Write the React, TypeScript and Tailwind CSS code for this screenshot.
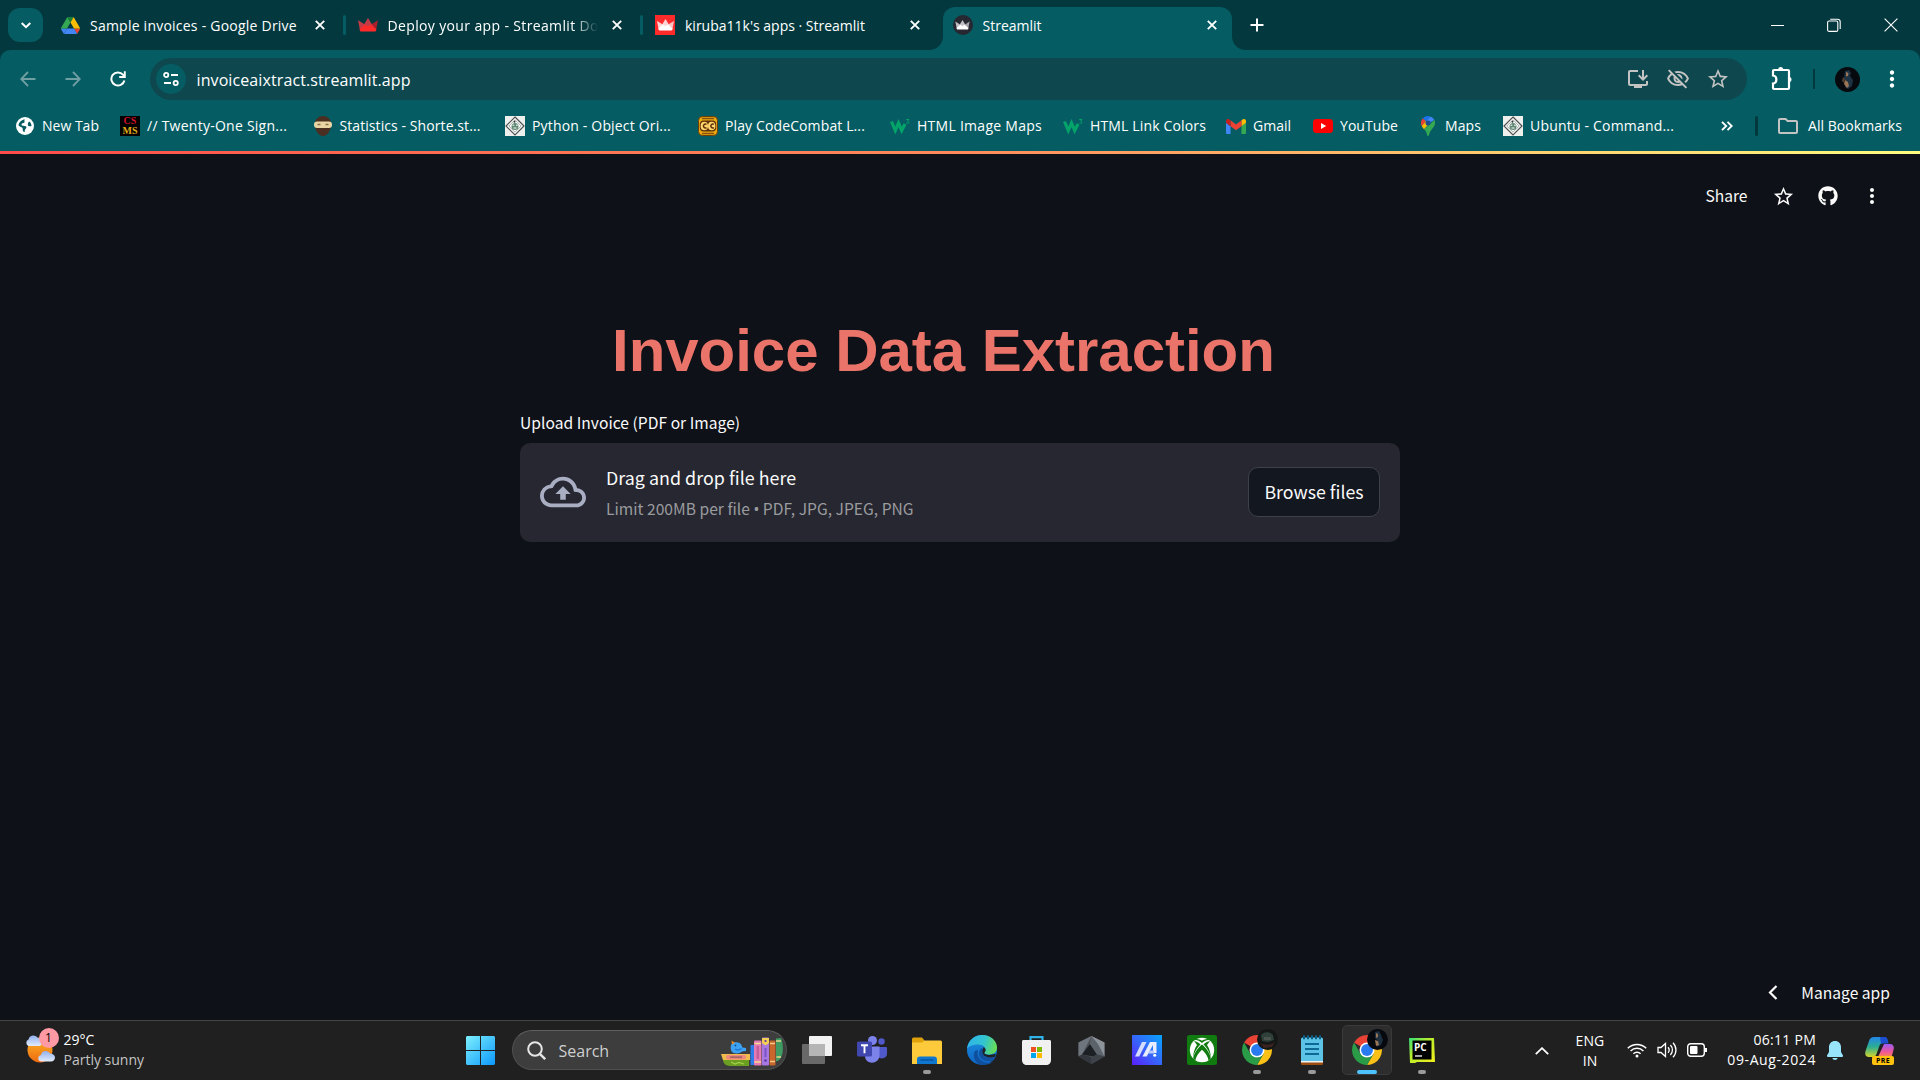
import type { ReactNode } from "react";
import {
  MdInstallDesktop,
  MdMoreVert,
  MdOutlineCloudUpload,
  MdOutlineFolder,
  MdOutlineVisibilityOff,
  MdStarBorder,
} from "react-icons/md";
import { FaGithub } from "react-icons/fa";

/* ---------- small glyphs ---------- */

function CloseGlyph() {
  return (
    <svg viewBox="0 0 10 10" className="size-[10px]" stroke="#fff" strokeWidth="1.9" fill="none">
      <path d="M.8.8l8.4 8.4M9.2.8L.8 9.2" />
    </svg>
  );
}

function Crown({ className, left, mid, right }: { className: string; left: string; mid: string; right: string }) {
  return (
    <svg viewBox="0 0 20 14" className={className}>
      <path d="M0 2.200l7 4.300L3.200 13.400c-.6 0-1-.4-1.200-1z" fill={mid} />
      <path d="M20 2.200l-7 4.300 3.800 6.900c.6 0 1-.4 1.200-1z" fill={right} />
      <path d="M10 0l5.500 9L10 12 4.500 9z" fill={mid} />
      <path d="M1.600 11.200L7 6.500l3 2 3-2 5.400 4.700-.4 1.200c-.2.600-.6 1-1.200 1H3.200c-.6 0-1-.4-1.200-1z" fill={left} />
    </svg>
  );
}

function DriveIcon() {
  return (
    <svg viewBox="0 0 87.3 78" className="h-[17px] w-[19px]">
      <path d="M6.600 66.850l3.850 6.650c.8 1.400 1.950 2.500 3.300 3.300L27.500 53H0c0 1.550.4 3.100 1.200 4.500z" fill="#4285f4" />
      <path d="M43.650 25L29.900 1.200c-1.350.8-2.500 1.900-3.300 3.300L1.200 48.500C.4 49.900 0 51.450 0 53h27.500z" fill="#34a853" />
      <path d="M73.550 76.800c1.350-.8 2.500-1.900 3.300-3.300l9.250-16c.8-1.400 1.200-2.950 1.200-4.500H59.800z" fill="#ea4335" />
      <path d="M43.650 25L57.400 1.200C56.050.4 54.500 0 52.900 0H34.400c-1.600 0-3.150.45-4.500 1.200z" fill="#188038" />
      <path d="M59.800 53H27.500L13.750 76.800c1.350.8 2.900 1.200 4.500 1.200h50.800c1.600 0 3.150-.45 4.500-1.200z" fill="#4285f4" />
      <path d="M73.400 26.500L60.700 4.500c-.8-1.400-1.950-2.500-3.300-3.300L43.650 25 59.800 53h27.450c0-1.550-.4-3.100-1.200-4.500z" fill="#fbbc04" />
    </svg>
  );
}

/* ---------- tab strip ---------- */

function Tab({ icon, title, fade, active, divider, tracking }: { icon: ReactNode; title: string; fade?: boolean; active?: boolean; divider?: boolean; tracking: string }) {
  return (
    <div className={`relative flex h-[43px] shrink-0 items-center rounded-t-[12px] pb-[7px] pl-[10px] ${active ? "w-[289.500px] bg-[#055c62]" : "w-[297.5px]"}`}>
      {active && (
        <>
          <svg viewBox="0 0 14 14" className="absolute -left-[14px] bottom-0 size-[14px]" fill="#055c62">
            <path d="M14 0v14H0C8 14 14 8 14 0z" />
          </svg>
          <svg viewBox="0 0 14 14" className="absolute -right-[14px] bottom-0 size-[14px]" fill="#055c62">
            <path d="M0 0v14h14C6 14 0 8 0 0z" />
          </svg>
        </>
      )}
      <span className="flex w-5 items-center justify-center">{icon}</span>
      <span className={`ml-[10px] w-[210px] overflow-hidden pt-px text-[14px] leading-5 whitespace-nowrap ${tracking} ${fade ? "[mask-image:linear-gradient(90deg,#000_88%,transparent_100%)]" : ""}`}>
        {title}
      </span>
      <span className="ml-[14.500px]">
        <CloseGlyph />
      </span>
      {divider && <span className="ml-[18px] h-5 w-[3px] rounded-full bg-[#055c62]" />}
    </div>
  );
}

function TabStrip() {
  return (
    <div className="flex h-[50px] bg-[#03393e]">
      <div className="mt-2 ml-2 flex h-[34px] w-[35px] items-center justify-center rounded-[12px] bg-[#055c62]">
        <svg viewBox="0 0 10 7" className="h-[7px] w-[10px]" fill="none" stroke="#fff" strokeWidth="2">
          <path d="M.7 1L5 5.200 9.300 1" />
        </svg>
      </div>
      <div className="ml-[7px] flex pt-[7px]">
        <Tab icon={<DriveIcon />} title="Sample invoices - Google Drive" divider tracking="tracking-[0.23px]" />
        <Tab
          icon={<Crown className="h-[14px] w-5" left="#ff2b2b" mid="#c33b46" right="#a8202c" />}
          title="Deploy your app - Streamlit Docs"
          fade
          divider
          tracking="tracking-[0.36px]"
        />
        <Tab
          icon={
            <span className="flex size-5 items-center justify-center bg-[#ff2b2b]">
              <Crown className="h-3 w-[17px]" left="#ffffff" mid="#ffd5d5" right="#ffc4c4" />
            </span>
          }
          title="kiruba11k's apps · Streamlit"
          tracking="tracking-normal"
        />
        <Tab
          icon={
            <span className="flex size-5 items-center justify-center rounded-full bg-[#262730]">
              <Crown className="h-[10px] w-[15px]" left="#ffffff" mid="#bfbfc4" right="#a5a5ab" />
            </span>
          }
          title="Streamlit"
          active
          tracking="tracking-normal"
        />
      </div>
      <svg viewBox="0 0 14 14" className="mt-[18px] ml-[18px] size-[14px]" stroke="#fff" strokeWidth="2">
        <path d="M7 .5v13M.5 7h13" />
      </svg>
      <div className="mt-[17px] mr-[22px] ml-auto flex h-4 items-center gap-[43px] text-white">
        <span className="h-px w-[13px] bg-white" />
        <svg viewBox="0 0 14 14" className="size-[14px]" fill="none" stroke="#fff" strokeWidth="1.1">
          <rect x=".6" y="3" width="10.200" height="10.400" rx="1.500" />
          <path d="M3.200 1.200h7.300c1.600 0 2.700 1 2.700 2.700v7" />
        </svg>
        <svg viewBox="0 0 14 14" className="size-[14px]" stroke="#fff" strokeWidth="1.100">
          <path d="M.6.6l12.800 12.800M13.400.6L.6 13.400" />
        </svg>
      </div>
    </div>
  );
}

/* ---------- toolbar ---------- */

function Avatar() {
  return (
    <svg viewBox="0 0 25 25" className="ml-[20px] size-[25px]">
      <circle cx="12.500" cy="12.500" r="12.500" fill="#06090e" />
      <path d="M10 4l4-1 2 3-1 3 3 4-1 6-4 3-3-2 1-5-2-4z" fill="#1d3242" />
      <path d="M11 5l2.500 1-.5 3-2 .5zM10 13l3 2 1 4-2 2-3-4z" fill="#9a7657" />
      <path d="M8 10l2 2-1 4-2-2z" fill="#53422f" />
    </svg>
  );
}

function Toolbar() {
  return (
    <div className="flex h-[58px] items-center text-white">
      <svg viewBox="0 0 16 16" className="ml-5 size-4" fill="none" stroke="#6f9fa3" strokeWidth="1.800">
        <path d="M15.500 8H1.600M8 1L1.200 8 8 15" />
      </svg>
      <svg viewBox="0 0 16 16" className="ml-[28.500px] size-4" fill="none" stroke="#6f9fa3" strokeWidth="1.800">
        <path d="M.5 8h13.900M8 1l6.800 7L8 15" />
      </svg>
      <svg viewBox="0 0 16 16" className="ml-[29px] size-4" fill="none" stroke="#fff" strokeWidth="2">
        <path d="M14.400 9.500A6.600 6.600 0 1 1 13 3.700l1.500 1.800" />
        <path d="M14.800.3v5.700H9.200" strokeWidth="1.900" />
      </svg>
      <div className="ml-[24.500px] flex h-[42px] w-[1597px] items-center rounded-full bg-[#0e484e] pl-[6px]">
        <span className="flex size-[30px] items-center justify-center rounded-full bg-[#055c62]">
          <svg viewBox="0 0 16 14" className="h-[14px] w-4" fill="none" stroke="#fff" strokeWidth="1.800">
            <circle cx="3.200" cy="3" r="2.100" />
            <path d="M8 3h7M1 11h7" />
            <circle cx="12.700" cy="11" r="2.100" />
          </svg>
        </span>
        <span className="ml-[10.500px] pt-px text-[16px] leading-6 tracking-[0.1px]">invoiceaixtract.streamlit.app</span>
        <div className="mr-[17px] ml-auto flex items-center gap-[16px] text-[#c3c3c3]">
          <MdInstallDesktop className="size-6" />
          <MdOutlineVisibilityOff className="size-6" />
          <MdStarBorder className="size-6" />
        </div>
      </div>
      <svg viewBox="0 0 22 26" className="mb-[3px] ml-[24px] h-[26px] w-[22px]" fill="none" stroke="#fff" strokeWidth="2.200">
        <path d="M3 5h14a1 1 0 0 1 1 1v17a1 1 0 0 1-1 1H3a1 1 0 0 1-1-1v-4.500c4.500-.5 4.500-7.500 0-8V6a1 1 0 0 1 1-1z" />
        <path d="M7.200 4.500a2.500 2.500 0 0 1 5 0zM18 12a2.500 2.500 0 0 1 0 5z" fill="#fff" stroke="none" />
      </svg>
      <span className="ml-[20px] h-5 w-[2px] bg-[#03393e]" />
      <Avatar />
      <MdMoreVert className="ml-[19px] size-[26px]" />
    </div>
  );
}

/* ---------- bookmarks ---------- */

function GlobeIcon() {
  return (
    <svg viewBox="0 0 20 20" className="size-5">
      <circle cx="10" cy="10" r="9" fill="#fff" />
      <path d="M10 3.500c-1.500 1.400.3 2.200-.6 3-1.200 1-2.900.4-2.900 2.200 0 1.500 3.800.6 4.800 2 .8 1.300-1.200 2-1.500 3.600-.1.900.3 1.700-.4 1.700-2.400-.6-1.200-3-2-4.100C6.600 11 4 10.500 3.500 9.300 4 6 6.800 3.500 10 3.500zM14.200 5.500c1.500 1 2.300 2.700 2.300 4.500-1.500.6-2.900.5-3.500-.6-.6-1.300.2-2.900 1.200-3.900z" fill="#055c62" />
    </svg>
  );
}

function TitleStackIcon() {
  return (
    <span className="flex size-5 flex-col items-center justify-center bg-black font-['Liberation_Serif'] text-[10px] leading-[10px] font-bold">
      <span className="block h-[10px] text-[#d0142c]">CS</span>
      <span className="block h-[10px] text-[#e0ad1a]">MS</span>
    </span>
  );
}

function NinjaIcon() {
  return (
    <svg viewBox="0 0 20 20" className="size-5">
      <path d="M10 0c4.500 0 7.500 3 8 7 .7 6-3 13-8 13S1.300 13 2 7c.5-4 3.500-7 8-7z" fill="#4a2e22" />
      <rect x="1" y="5.500" width="18" height="6.500" rx="3" fill="#e9d5a4" />
      <path d="M4.500 8.500h3M12.500 8.500h3" stroke="#8a7048" strokeWidth="1.500" />
    </svg>
  );
}

function DiamondIcon() {
  return (
    <svg viewBox="0 0 20 20" className="size-5">
      <rect width="20" height="20" fill="#eef0ee" />
      <path d="M10 1l9 9-9 9-9-9z" fill="#fff" stroke="#4b4f4d" strokeWidth="1.200" />
      <path d="M10 3.800l6.200 6.200-6.200 6.200L3.800 10z" fill="none" stroke="#8d9491" strokeWidth=".8" />
      <circle cx="10" cy="10.500" r="3.500" fill="#5f8873" />
      <path d="M7.500 9.200h1.800M11 9.200h1.800M8.500 12h3" stroke="#fff" strokeWidth="1" />
      <circle cx="9.500" cy="5.800" r="1" fill="#333" />
    </svg>
  );
}

function CodeCombatIcon() {
  return (
    <svg viewBox="0 0 20 20" className="size-5">
      <rect x=".5" y=".5" width="19" height="19" rx="4" fill="#e9a90f" stroke="#6b3d09" />
      <path d="M4 2.500h12M4 17.500h12" stroke="#8a5210" strokeWidth="1.400" />
      <rect x="1.800" y="4.500" width="16.400" height="11" rx="4" fill="#5d2f0b" />
      <ellipse cx="6.300" cy="10" rx="3.700" ry="4.300" fill="#ffd76a" />
      <ellipse cx="13.700" cy="10" rx="3.700" ry="4.300" fill="#ffd76a" />
      <path d="M8.500 8.300a2 2 0 1 0 0 3.400M15.900 8.300a2 2 0 1 0 0 3.400" fill="none" stroke="#5d2f0b" strokeWidth="1.500" />
    </svg>
  );
}

function W3Icon() {
  return (
    <svg viewBox="0 0 20 20" className="size-5" fill="none" stroke="#04a36a">
      <path d="M1.500 5.500l3.800 9L8.500 7l3.200 7.500L15 8" strokeWidth="3.200" />
      <path d="M16.200 3.500h2.800l-1.500 1.600c2.400.2 1.800 3-1.200 2.100" strokeWidth="1" />
    </svg>
  );
}

function GmailIcon() {
  return (
    <svg viewBox="52 42 88 66" className="h-[15px] w-5">
      <path fill="#4285f4" d="M58 108h14V74L52 59v43c0 3.320 2.690 6 6 6" />
      <path fill="#34a853" d="M120 108h14c3.320 0 6-2.690 6-6V59l-20 15" />
      <path fill="#fbbc04" d="M120 48v26l20-15v-8c0-7.420-8.470-11.650-14.400-7.200" />
      <path fill="#ea4335" d="M72 74V48l24 18 24-18v26L96 92" />
      <path fill="#c5221f" d="M52 51v8l20 15V48l-5.600-4.200c-5.940-4.450-14.400-.22-14.400 7.200" />
    </svg>
  );
}

function YouTubeIcon() {
  return (
    <svg viewBox="0 0 20 14" className="h-[14px] w-5">
      <rect width="20" height="14" rx="3.500" fill="#f00" />
      <path d="M8 4l5.200 3L8 10z" fill="#fff" />
    </svg>
  );
}

function MapsIcon() {
  return (
    <svg viewBox="0 0 14 20" className="h-5 w-[14px]">
      <path d="M7 0a7 7 0 0 0-5.300 2.400L5 5.200 9.200.4A7 7 0 0 0 7 0z" fill="#1a73e8" />
      <path d="M1.700 2.400A7 7 0 0 0 .7 10L5 5.200z" fill="#ea4335" />
      <path d="M9.200.4L5 5.200l-.1 3.500L13.400 4A7 7 0 0 0 9.200.4z" fill="#4285f4" />
      <path d="M.7 10a17 17 0 0 0 2.400 3.200L9 6.500 5 5.200z" fill="#fbbc04" />
      <path d="M13.400 4A6.900 6.900 0 0 1 14 7c0 4-3.500 5.500-5.200 9.500C8 18.500 8 20 7 20s-1-2-1.800-4a12 12 0 0 0-2.100-2.800z" fill="#34a853" />
      <circle cx="7" cy="7" r="2.500" fill="#1b4f8f" />
    </svg>
  );
}

const bookmarks: { icon: ReactNode; label: string; box: string; tracking: string }[] = [
  { icon: <GlobeIcon />, label: "New Tab", box: "w-[105px]", tracking: "tracking-normal" },
  { icon: <TitleStackIcon />, label: "// Twenty-One Sign...", box: "w-[192.500px]", tracking: "tracking-[0.25px]" },
  { icon: <NinjaIcon />, label: "Statistics - Shorte.st...", box: "w-[192.500px]", tracking: "tracking-[0.08px]" },
  { icon: <DiamondIcon />, label: "Python - Object Ori...", box: "w-[193px]", tracking: "tracking-[0.17px]" },
  { icon: <CodeCombatIcon />, label: "Play CodeCombat L...", box: "w-[192px]", tracking: "tracking-[0.12px]" },
  { icon: <W3Icon />, label: "HTML Image Maps", box: "w-[173px]", tracking: "tracking-[0.27px]" },
  { icon: <W3Icon />, label: "HTML Link Colors", box: "w-[163px]", tracking: "tracking-[0.15px]" },
  { icon: <GmailIcon />, label: "Gmail", box: "w-[87px]", tracking: "tracking-normal" },
  { icon: <YouTubeIcon />, label: "YouTube", box: "w-[105px]", tracking: "tracking-[0.06px]" },
  { icon: <MapsIcon />, label: "Maps", box: "w-[85px]", tracking: "tracking-[0.1px]" },
  { icon: <DiamondIcon />, label: "Ubuntu - Command...", box: "w-[218px]", tracking: "tracking-[0.19px]" },
];

function BookmarksBar() {
  return (
    <div className="flex h-[36px] items-center pl-[15px] text-[14px] leading-5 whitespace-nowrap">
      {bookmarks.map((b) => (
        <div key={b.label} className={`flex shrink-0 items-center gap-[7px] ${b.box}`}>
          <span className="flex w-5 items-center justify-center">{b.icon}</span>
          <span className={b.tracking}>{b.label}</span>
        </div>
      ))}
      <svg viewBox="0 0 12 10" className="h-[10px] w-3" fill="none" stroke="#fff" strokeWidth="1.900">
        <path d="M1 .8L5.200 5 1 9.200M6.500.8L10.700 5 6.500 9.200" />
      </svg>
      <span className="ml-[22px] h-5 w-[3px] rounded-full bg-[#03393e]" />
      <MdOutlineFolder className="ml-[18px] size-6 text-[#c3c3c3]" />
      <span className="ml-[8px] tracking-[0.05px]">All Bookmarks</span>
    </div>
  );
}

/* ---------- page ---------- */

function AppPage() {
  return (
    <main className="flex flex-1 flex-col bg-[#0e1117] font-['Noto_Sans_CJK_SC','Noto_Sans',sans-serif] text-[#fafafa]">
      <div className="h-[3px] bg-linear-to-r from-[#ff4b4b] via-[#ff8a5c] to-[#fffd80]" />
      <div className="mt-[26px] flex h-8 items-center justify-end pr-[36px]">
        <span className="-mt-[2px] text-[15.600px] leading-6">Share</span>
        <MdStarBorder className="ml-[24px] size-[23px]" />
        <FaGithub className="ml-[23.500px] size-5" />
        <MdMoreVert className="ml-[22px] size-6" />
      </div>
      <h1 className="mt-[103px] ml-[612px] font-['Liberation_Sans',Arial,sans-serif] text-[60px] leading-[72px] font-bold tracking-[-0.03px] text-[#ea7469]">
        Invoice Data Extraction
      </h1>
      <section className="mx-auto mt-[23px] w-[880px]">
        <p className="h-[33px] text-[15.600px] leading-6 tracking-[0.03px]">Upload Invoice (PDF or Image)</p>
        <div className="flex h-[99px] items-center rounded-[10px] bg-[#262730] px-5">
          <MdOutlineCloudUpload className="mb-[2px] size-[46px] text-[#a9aec3]" />
          <div className="ml-5 flex flex-col gap-[6px]">
            <span className="text-[17.850px] leading-[26px] tracking-[0.03px]">Drag and drop file here</span>
            <span className="text-[15.600px] leading-6 tracking-[0.02px] text-[#9a9b9f]">
              Limit 200MB per file <span className="font-['Noto_Sans']">•</span> PDF, JPG, JPEG, PNG
            </span>
          </div>
          <button className="mb-[2px] ml-auto h-[50px] w-[132px] rounded-[10px] border border-[#3e4148] bg-[#131720] pb-px text-[17.750px] leading-6">
            Browse files
          </button>
        </div>
      </section>
      <div className="mt-auto mb-[16px] flex h-6 items-center justify-end pr-[30px]">
        <svg viewBox="0 0 10 15" className="h-[15px] w-[10px]" fill="none" stroke="#fafafa" strokeWidth="2.200">
          <path d="M8.500 1L2 7.500 8.500 14" />
        </svg>
        <span className="ml-[23px] text-[15.600px] leading-6 tracking-[0.02px]">Manage app</span>
      </div>
    </main>
  );
}

/* ---------- taskbar icons ---------- */

function WeatherIcon() {
  return (
    <span className="relative flex h-[30px] w-[32px]">
      <svg viewBox="0 0 32 30" className="h-[30px] w-8">
        <defs>
          <linearGradient id="sun" x1="0" y1="0" x2="0" y2="1">
            <stop offset="0" stopColor="#fbb628" />
            <stop offset="1" stopColor="#ee6a0f" />
          </linearGradient>
          <linearGradient id="cloud" x1="0" y1="0" x2="0" y2="1">
            <stop offset="0" stopColor="#8fb0ee" />
            <stop offset="1" stopColor="#e3ecfb" />
          </linearGradient>
        </defs>
        <circle cx="15" cy="15" r="12.500" fill="url(#sun)" />
        <path d="M3.500 11A3.500 3.500 0 0 1 3.500 4.500 5.200 5.200 0 0 1 13 3c3 0 4 2 4 4s-1 4-3 4z" fill="url(#cloud)" />
        <path d="M16 26.500a3.300 3.300 0 0 1 0-6.500 4.800 4.800 0 0 1 9-1.500c3 0 5 1.700 5 4s-1.500 4-4 4z" fill="url(#cloud)" />
      </svg>
      <span className="absolute -top-[7px] left-[14px] flex size-5 items-center justify-center rounded-full bg-[#ff99a4] text-[12px] leading-none text-black">1</span>
    </span>
  );
}

function StartIcon() {
  return (
    <svg viewBox="0 0 29 29" className="size-[29px]">
      <defs>
        <linearGradient id="start" x1="0" y1="0" x2="1" y2="1">
          <stop offset="0" stopColor="#7df0fd" />
          <stop offset="1" stopColor="#0c97fb" />
        </linearGradient>
      </defs>
      <path d="M1 0h13v14H0V1zM15 0h13l1 1v13H15zM0 15h14v14H1l-1-1zM15 15h14v13l-1 1H15z" fill="url(#start)" />
    </svg>
  );
}

function BooksIcon() {
  return (
    <svg viewBox="0 0 62 30" className="h-[30px] w-[62px]">
      <path d="M2 23h26v6H9c-4 0-7-3-7-6z" fill="#6b9f22" />
      <path d="M10 25l4 2 4-1.500 5 1.500" stroke="#a6cf4c" strokeWidth="1.200" fill="none" />
      <path d="M0 17h29v6H2z" fill="#f0bd4c" />
      <rect x="5" y="18" width="20" height="4.500" rx="2" fill="#f0897d" />
      <rect x="9" y="19.300" width="12" height="1.800" fill="#a66666" />
      <path d="M10.500 7c2-2 5.500-2.500 8-1 2 1.200 2.500 3 2.800 4.500L25 11v3l-4 .5c-1.500 2-6 2.500-8.500 1.500-3-1.500-3.500-6-2-9z" fill="#3ea2f2" />
      <path d="M10.500 3.500l3.500 2.300-3 1.700z" fill="#e98a1f" />
      <path d="M14 12c2 1.500 5 1 6.500-.5" stroke="#1c78cf" strokeWidth="1.500" fill="none" />
      <circle cx="14.500" cy="8.500" r=".9" fill="#174d86" />
      <rect x="29.500" y="8" width="3.500" height="20" fill="#2e7bea" />
      <rect x="33" y="3.500" width="7.500" height="25" rx="1" fill="#e47bb6" />
      <path d="M33.500 6.500h6.500M33.500 25h6.500" stroke="#f8dc8a" strokeWidth="1.600" />
      <path d="M36.800 9v13" stroke="#c45f9b" strokeWidth="2.500" />
      <rect x="41" y=".5" width="7" height="28" rx="1" fill="#a778e2" />
      <path d="M41 1h7v5L44.500 8.500 41 6z" fill="#f5cf55" />
      <circle cx="44.500" cy="4" r="1.100" fill="#5b37a5" />
      <circle cx="44.500" cy="23.500" r="1.300" fill="#5b37a5" />
      <path d="M44.500 11v9" stroke="#7a52c6" strokeWidth="2" />
      <rect x="48.500" y="3.500" width="6" height="25" rx="1" fill="#c8662c" />
      <path d="M49 6.500h5M49 24.500h5" stroke="#f8c984" strokeWidth="1.600" />
      <path d="M55 1.500l5-.5c2 4 2.500 13 1 17-1 4-3 6-6 6.500z" fill="#3f9b62" />
      <path d="M55 4h5M55.500 20h4.500" stroke="#e9d98a" strokeWidth="1.300" />
    </svg>
  );
}

function TaskViewIcon() {
  return (
    <svg viewBox="0 0 30 28" className="h-7 w-[30px]">
      <rect x="7" y="0" width="23" height="20" rx="1" fill="#f2f2f2" />
      <rect x="0" y="8" width="23" height="20" rx="1" fill="#696969" />
      <path d="M7 8h16v12H7z" fill="#b5b5b5" />
    </svg>
  );
}

function TeamsIcon() {
  return (
    <svg viewBox="0 0 30 27" className="mb-px h-[27px] w-[30px]">
      <circle cx="24.500" cy="5.500" r="3.200" fill="#5059c9" />
      <path d="M21 11h8a1 1 0 0 1 1 1v6c0 4-6 6-9 3z" fill="#5059c9" />
      <circle cx="15.500" cy="4.500" r="4.500" fill="#7b83eb" />
      <path d="M9 10.500h13.500V19c0 10-14.500 10-14.500 1z" fill="#7b83eb" />
      <rect x="0" y="5.500" width="15" height="15" rx="1.500" fill="#4048b0" />
      <path d="M4 9.300h7M7.500 9.300v8" stroke="#fff" strokeWidth="1.900" />
    </svg>
  );
}

function FolderIcon() {
  return (
    <svg viewBox="0 0 30 27" className="h-[27px] w-[30px]">
      <path d="M0 2a1.500 1.500 0 0 1 1.500-1.500H10l2.500 3V8H0z" fill="#e0a10a" />
      <path d="M0 5.500h10l2.500-2H28.500A1.500 1.500 0 0 1 30 5v22H0z" fill="#fdca3b" />
      <path d="M5 27v-4.500c0-2 1-3 3-3h14c2 0 3 1 3 3V27z" fill="#0f78ce" />
      <path d="M8.500 23h13" stroke="#09509a" strokeWidth="1.300" />
    </svg>
  );
}

function EdgeIcon() {
  return (
    <svg viewBox="0 0 30 30" className="mb-px size-[30px]">
      <defs>
        <linearGradient id="edgeTop" x1="0" y1=".4" x2="1" y2=".6">
          <stop offset="0" stopColor="#2fb6ea" />
          <stop offset=".55" stopColor="#33c4cd" />
          <stop offset="1" stopColor="#6be04e" />
        </linearGradient>
        <linearGradient id="edgeSide" x1="0" y1="0" x2="0" y2="1">
          <stop offset="0" stopColor="#1c93e0" />
          <stop offset="1" stopColor="#0d63c4" />
        </linearGradient>
      </defs>
      <circle cx="15" cy="15" r="15" fill="url(#edgeSide)" />
      <path d="M11 15c-2 7 3 13 11 13 2 0 4-.9 5.500-2.500C24 29 20 30 15 30 9 29 6 23 7 18c.6-2 2-3 4-3z" fill="#104f9c" />
      <path d="M17 18c2.500 3 7 4 11.500 2.500.5 1.500-1 4-2.500 5-5 2-13 0-14-6-.4-3 1-5.500 3-6.500 2 1 3 3 2 5z" fill="#12519f" />
      <path d="M0 14C1 5 8 0 15 0c9 0 15 6 15 12.500 0 5-4 7-8 7-3.500 0-5.500-1.200-4.500-2.500 2.500-4-1-7.500-6.500-7.500C6 9.500 1.500 11 0 14z" fill="url(#edgeTop)" />
      <path d="M16.500 12c3 1.800 2.500 4 1 5.500-1 1.500 2 2.500 5 2.500l6-1c.8 2-1 3-3.500 3.200-5 .4-9-1.200-9.500-4.700-.2-2 .6-3 1-5.500z" fill="#202020" />
    </svg>
  );
}

function StoreIcon() {
  return (
    <svg viewBox="0 0 29 29" className="mr-px size-[29px]">
      <path d="M8.500 6V1.200h12V6" fill="none" stroke="#2fb3e8" strokeWidth="2.200" />
      <path d="M0 5.500C0 4.600.6 4 1.500 4h26c.9 0 1.500.6 1.500 1.500V24c0 3-2 5-5 5H5c-3 0-5-2-5-5z" fill="#f1f1f1" />
      <rect x="9" y="11" width="5" height="5" fill="#f25022" />
      <rect x="15" y="11" width="5" height="5" fill="#7fba00" />
      <rect x="9" y="17" width="5" height="5" fill="#00a4ef" />
      <rect x="15" y="17" width="5" height="5" fill="#ffb900" />
    </svg>
  );
}

function HexIcon() {
  return (
    <svg viewBox="0 0 27 28" className="mr-px h-7 w-[27px]">
      <path d="M13.500 0L26.500 6.500V20.500L13.500 28 .5 20.500V6.500z" fill="#4c5158" />
      <path d="M13.500 0L.5 6.500V20L4 18.500z" fill="#6f757d" />
      <path d="M13.500 0l13 6.500v14L20 17z" fill="#8d939a" />
      <path d="M.5 20.500L13.500 28v-7L4 18.500z" fill="#33373d" />
      <path d="M12 8l7 10.500-3 2-12-2z" fill="#1c1f23" />
      <path d="M13.500 0L12 8l7 10.500 7.500 2L20 8z" fill="#5d636b" />
      <path d="M13.500 28v-7l5.500-2.500 7.500 2z" fill="#3e4249" />
    </svg>
  );
}

function MyAsusIcon() {
  return (
    <svg viewBox="0 0 30 30" className="size-[30px]">
      <defs>
        <linearGradient id="asus" x1="0" y1="1" x2="1" y2="0">
          <stop offset="0" stopColor="#5a1df8" />
          <stop offset=".5" stopColor="#3567fb" />
          <stop offset="1" stopColor="#06a5fb" />
        </linearGradient>
      </defs>
      <rect width="30" height="30" fill="url(#asus)" />
      <path d="M3 21.500L10 7h4.500L7.200 21.500z" fill="#d5dcff" />
      <path d="M10.500 21.500L18 7h6.500v11H21v-8L14.700 21.500z" fill="#e8ecff" />
      <path d="M18 15.500h4v3h-5.600z" fill="#b9c8ff" />
      <circle cx="22.700" cy="20.200" r="1.500" fill="#fff" />
    </svg>
  );
}

function XboxIcon() {
  return (
    <svg viewBox="0 0 30 30" className="size-[30px]">
      <rect width="30" height="30" rx="2.500" fill="#107c10" />
      <circle cx="15" cy="15" r="12.200" fill="#fff" />
      <path d="M7.300 5.400c2-1 5 .6 7.700 2.600 2.700-2 5.700-3.600 7.700-2.600l-.6-.9C20.500 3.500 17 4.500 15 5.700 13 4.500 9.500 3.500 7.900 4.500z" fill="#107c10" />
      <path d="M15 9.500c4 3.200 9 10 8.700 14.200L21.500 25.500C21 21 17.500 17 15 14.800 12.500 17 9 21 8.500 25.500l-2.200-1.800C6 19.500 11 12.700 15 9.500z" fill="#107c10" />
      <path d="M7 6c2.500.2 5 2 6.500 3.500C11 12 7 17 6 23c.3-5 1.500-9.500 4-13C9 8.500 8 7.200 7 6zM23 6c-2.500.2-5 2-6.500 3.500C19 12 23 17 24 23c-.3-5-1.500-9.500-4-13 1-1.500 2-2.800 3-4z" fill="#107c10" />
    </svg>
  );
}

function ChromeIcon({ children }: { children: ReactNode }) {
  return (
    <span className="relative mb-px size-[30px]">
      <svg viewBox="0 0 48 48" className="size-[30px]">
        <path d="M24 24L3.220 12A24 24 0 0 1 44.780 12z" fill="#ea4335" />
        <path d="M24 12h20.780A24 24 0 0 1 24 48l10.400-18z" fill="#fbc116" />
        <path d="M3.220 12L13.600 30 24 36l3-.3L24 48A24 24 0 0 1 3.220 12z" fill="#2a9c48" />
        <path d="M34.400 30L24 48l-3-1 6-12z" fill="#2a9c48" />
        <circle cx="24" cy="24" r="12" fill="#fff" />
        <circle cx="24" cy="24" r="9.500" fill="#2a7bf0" />
      </svg>
      <svg viewBox="0 0 21 21" className="absolute -top-[6px] left-[15px] size-[21px]">
        {children}
      </svg>
    </span>
  );
}

function NotepadIcon() {
  return (
    <svg viewBox="0 0 22 30" className="h-[30px] w-[22px]">
      <rect x="0" y="26" width="22" height="4" rx="1" fill="#9a4c12" />
      <rect x="0" y="25" width="22" height="2.500" fill="#f3f3f3" />
      <path d="M0 4a1.500 1.500 0 0 1 1.500-1.500h19A1.500 1.500 0 0 1 22 4v22H0z" fill="#5cc3e6" />
      <path d="M3 .3v4M7 .3v4M11 .3v4M15 .3v4M19 .3v4" stroke="#0b5f86" strokeWidth="2" />
      <path d="M4 9h14M4 14h14M4 19h14" stroke="#0e6a94" strokeWidth="1.800" />
    </svg>
  );
}

function PyCharmIcon() {
  return (
    <svg viewBox="0 0 26 26" className="size-[26px]">
      <defs>
        <linearGradient id="pc" x1="0" y1="0" x2="1" y2="1">
          <stop offset="0" stopColor="#2fe07a" />
          <stop offset=".4" stopColor="#b6ee2e" />
          <stop offset="1" stopColor="#f5ee1c" />
        </linearGradient>
      </defs>
      <path d="M0 1h25l1 24H8l-2 1H1z" fill="url(#pc)" />
      <rect x="3.500" y="3.500" width="19" height="19" fill="#000" />
      <text x="5" y="13.500" fontFamily="Open Sans" fontWeight="700" fontSize="10" fill="#fff">
        PC
      </text>
      <path d="M6 19h7" stroke="#fff" strokeWidth="1.300" />
    </svg>
  );
}

function CopilotIcon() {
  return (
    <span className="relative h-7 w-[30px]">
      <svg viewBox="0 0 30 28" className="h-[28px] w-[30px]">
        <defs>
          <linearGradient id="cpA" x1="0" y1="0" x2="0" y2="1">
            <stop offset="0" stopColor="#2385ea" />
            <stop offset=".5" stopColor="#2cae8f" />
            <stop offset="1" stopColor="#d8d62a" />
          </linearGradient>
          <linearGradient id="cpB" x1="0" y1="0" x2="0" y2="1">
            <stop offset="0" stopColor="#9a5cf2" />
            <stop offset=".6" stopColor="#f0569a" />
            <stop offset="1" stopColor="#f68b4a" />
          </linearGradient>
        </defs>
        <path d="M9 0h10c2.500 0 3.500 2 4 6h-5c-2 0-3 1-4 4l-2.500 7c-.7 2-2 3-4 3H4c-3 0-4.500-2-3.500-6L4 4c.8-2.500 2.500-4 5-4z" fill="url(#cpA)" />
        <path d="M15 0h5c2 0 3 2.500 3.500 6.500H18c-1 0-1.500.3-2 1z" fill="#1c4fd0" />
        <path d="M19 7h6c3 0 4.500 2.500 3.500 6L26.500 20H13z" fill="url(#cpB)" />
      </svg>
      <span className="absolute top-[19px] left-[7px] flex h-[9px] w-[22px] items-center justify-center rounded-[2px] bg-[#ffc20e] text-[7px] leading-none font-bold tracking-[0.4px] text-black">PRE</span>
    </span>
  );
}

/* ---------- taskbar ---------- */

const apps: { name: string; icon: ReactNode; state?: "open" | "focused" }[] = [
  { name: "task-view", icon: <TaskViewIcon /> },
  { name: "teams", icon: <TeamsIcon /> },
  { name: "explorer", icon: <FolderIcon />, state: "open" },
  { name: "edge", icon: <EdgeIcon /> },
  { name: "store", icon: <StoreIcon /> },
  { name: "armoury", icon: <HexIcon /> },
  { name: "myasus", icon: <MyAsusIcon /> },
  { name: "xbox", icon: <XboxIcon /> },
  {
    name: "chrome-1",
    icon: (
      <ChromeIcon>
        <circle cx="10.500" cy="10.500" r="10.500" fill="#131715" />
        <path d="M4 6c4-4 9-3 12 0l1 5-6 2-6-1z" fill="#2f3f39" />
        <path d="M7 8h7v3H7z" fill="#4a534c" />
        <path d="M3 14c4 2 9 3 15-1l-3 5-8 1z" fill="#3a2320" />
      </ChromeIcon>
    ),
    state: "open",
  },
  { name: "notepad", icon: <NotepadIcon />, state: "open" },
  {
    name: "chrome-2",
    icon: (
      <ChromeIcon>
        <circle cx="10.500" cy="10.500" r="10.500" fill="#06090e" />
        <path d="M8 3l4-1 2 4 2 5-2 5-4 2 1-6-3-3z" fill="#1d3040" />
        <path d="M9 4l2 1v3l-2 1zM8 11l3 1 1 4-3 1z" fill="#9a7657" />
      </ChromeIcon>
    ),
    state: "focused",
  },
  { name: "pycharm", icon: <PyCharmIcon />, state: "open" },
];

function Taskbar() {
  return (
    <footer className="flex h-[60px] shrink-0 border-t border-[#444] bg-[#202020] text-[14px] text-white">
      <div className="flex w-[466px] items-start pt-[14px] pl-[24.500px]">
        <WeatherIcon />
        <div className="-mt-[5px] ml-[7px] flex flex-col leading-5">
          <span>29°C</span>
          <span className="text-[#c4c4c4]">Partly sunny</span>
        </div>
      </div>
      <div className="pt-[15px]">
        <StartIcon />
      </div>
      <div className="mt-[9px] ml-[17px] flex h-10 w-[275px] items-center rounded-full border border-[#4f4f4f] border-t-[#606060] bg-[#3d3d3d] pr-[3px] pl-[14px]">
        <svg viewBox="0 0 19 19" className="size-[19px]" fill="none" stroke="#e6e6e6" strokeWidth="2">
          <circle cx="8" cy="8" r="6.800" />
          <path d="M12.800 12.800l5.400 5.400" strokeWidth="2.400" />
        </svg>
        <span className="ml-[12.500px] pt-px text-[16px] leading-5 text-[#cfcfcf]">Search</span>
        <span className="mt-[3px] ml-auto">
          <BooksIcon />
        </span>
      </div>
      <div className="ml-[2.500px] grid grid-cols-[repeat(12,55px)]">
        {apps.map((a) => (
          <div key={a.name} className="relative flex justify-center pt-[4px]">
            <div className={`flex size-[50px] items-center justify-center rounded-[5px] ${a.state === "focused" ? "border border-[#3a3a3a] bg-[#2d2d2d]" : ""}`}>{a.icon}</div>
            {a.state === "open" && <span className="absolute top-[49px] h-1 w-2 rounded-full bg-[#9a9a9a]" />}
            {a.state === "focused" && <span className="absolute top-[49px] h-1 w-5 rounded-full bg-[#4cc2ff]" />}
          </div>
        ))}
      </div>
      <div className="mr-[25px] ml-auto flex items-center">
        <svg viewBox="0 0 14 8" className="h-2 w-[14px]" fill="none" stroke="#fff" strokeWidth="1.800">
          <path d="M.8 7.200L7 1.200l6.200 6" />
        </svg>
        <div className="ml-[26px] w-[30px] text-center leading-5">
          <div className="tracking-[0.1px]">ENG</div>
          <div>IN</div>
        </div>
        <svg viewBox="0 0 20 16" className="mb-[2px] ml-[22px] h-4 w-5" fill="none" stroke="#fff" strokeWidth="1.500">
          <path d="M.8 6.200a13 13 0 0 1 18.400 0M3.600 9a9 9 0 0 1 12.800 0M6.400 11.700a5.100 5.100 0 0 1 7.200 0" />
          <circle cx="10" cy="14" r="1.500" fill="#fff" stroke="none" />
        </svg>
        <svg viewBox="0 0 20 18" className="mb-px ml-[10px] h-[18px] w-5" fill="none" stroke="#fff" strokeWidth="1.300">
          <path d="M1 6.500h3L8.500 2.500v13L4 11.500H1z" />
          <path d="M11 6.300a4 4 0 0 1 0 5.400M13.400 4a7.200 7.200 0 0 1 0 10M16 1.700a10.500 10.500 0 0 1 0 14.600" />
        </svg>
        <svg viewBox="0 0 20 14" className="mb-px ml-[10px] h-[14px] w-5" fill="none" stroke="#fff" strokeWidth="1.400">
          <rect x=".7" y=".7" width="16.600" height="12.600" rx="3" />
          <rect x="3" y="3" width="7.500" height="8" rx="1" fill="#fff" stroke="none" />
          <path d="M19 5v4" strokeWidth="2" />
        </svg>
        <div className="mb-[2px] ml-[17px] w-[92px] text-right leading-5">
          <div className="tracking-[0.27px]">06:11 PM</div>
          <div className="tracking-[0.600px]">09-Aug-2024</div>
        </div>
        <svg viewBox="0 0 16 19" className="ml-[11px] h-[19px] w-4" fill="#98e4fb">
          <path d="M8 0c3.600 0 6 2.700 6 6v5l2 3.500c.2.800-.2 1.500-1 1.500H1c-.8 0-1.200-.7-1-1.500L2 11V6c0-3.300 2.400-6 6-6zM5.300 17h5.400c-.6 2.600-4.800 2.600-5.400 0z" />
        </svg>
        <span className="ml-[22px] flex">
          <CopilotIcon />
        </span>
      </div>
    </footer>
  );
}

export default function App() {
  return (
    <div className="flex h-[1080px] w-[1920px] flex-col overflow-hidden bg-[#0e1117] font-['Open_Sans','Noto_Sans',sans-serif] text-white">
      <TabStrip />
      <div className="bg-[#03393e]">
        <div className="h-[101px] rounded-t-[10px] bg-[#055c62]">
          <Toolbar />
          <BookmarksBar />
        </div>
      </div>
      <AppPage />
      <Taskbar />
    </div>
  );
}
